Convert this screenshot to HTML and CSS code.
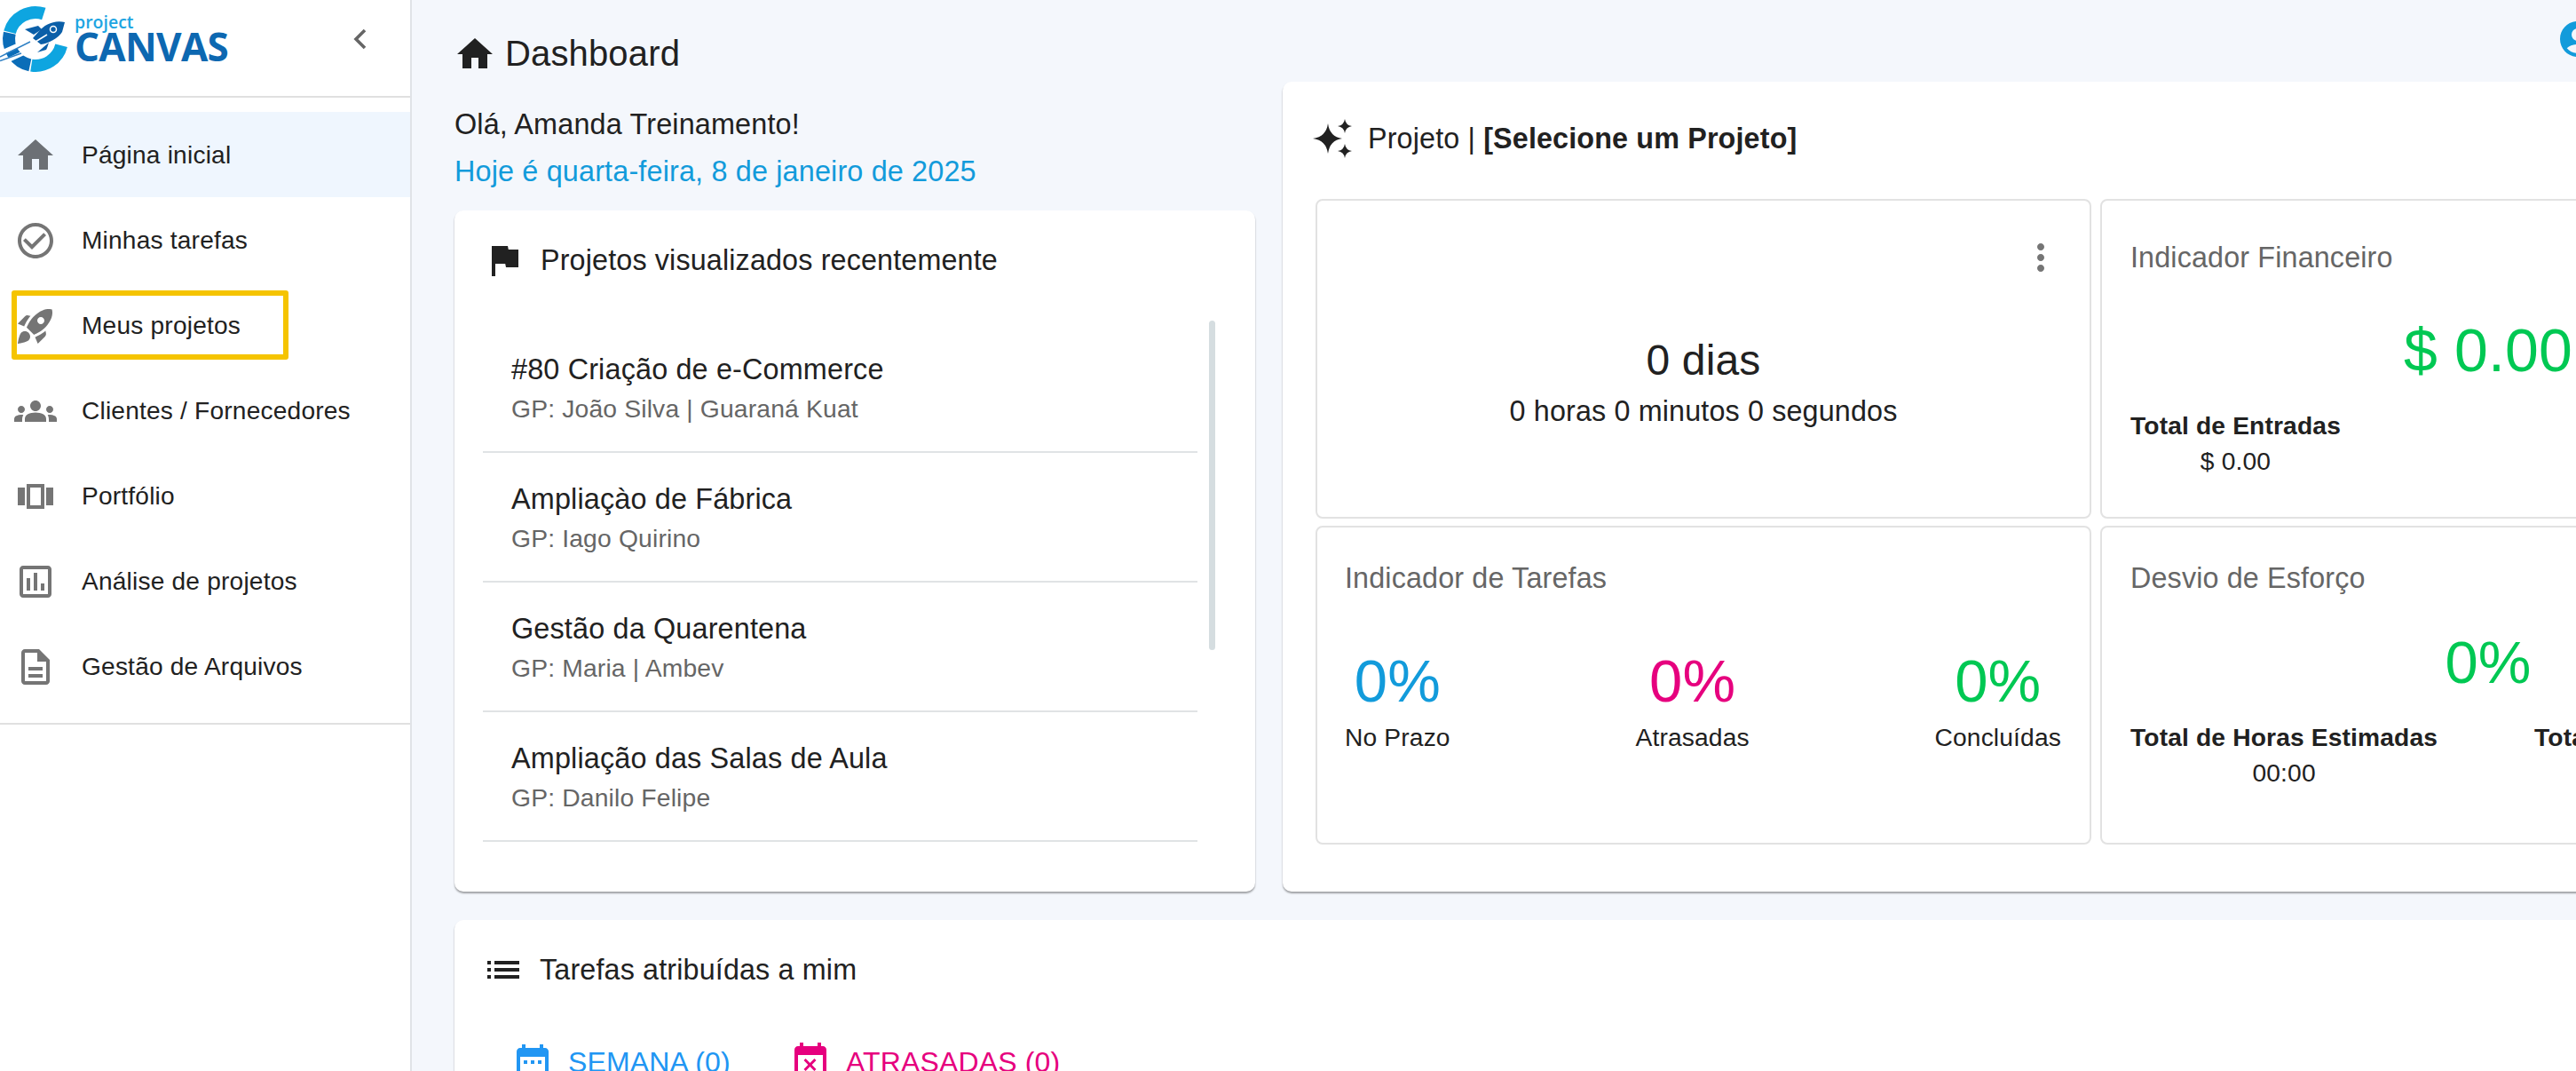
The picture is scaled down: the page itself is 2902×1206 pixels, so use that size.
FILE: index.html
```html
<!DOCTYPE html>
<html lang="pt-BR">
<head>
    <meta charset="UTF-8">
    <title>Project Canvas - Dashboard</title>
    <link rel="stylesheet" href="styles.css">
</head>
<body>
    <aside class="sidebar">
        <div class="sidebar-header">
            <div class="logo">
                <svg class="logo-mark" viewBox="0 0 80 88" width="80" height="88">
                    <g fill="none" stroke-width="14">
                        <path d="M49.3 15.5A30 30 0 0 0 11 36.2" stroke="#0ea5e0"/>
                        <path d="M10.8 37.3A30 30 0 0 0 33.8 73.3" stroke="#0b6db8"/>
                        <path d="M35.3 73.6A30 30 0 0 0 69.1 51.3" stroke="#0ea5e0"/>
                    </g>
                    <path d="M0 60L36 44M0 72L30 58" stroke="#fff" stroke-width="5" fill="none"/>
                    <path d="M0 64L34 47M0 68.500L24 60" stroke="#2f80c4" stroke-width="1.500" fill="none"/>
                    <path d="M73 25C61 22 50 28 44 35L37 43L46 50C54 49 66 43 70 36Z" fill="#0b5fa8"/>
                    <path d="M28 33L43 29L47 33L38 39Z" fill="#0b5fa8"/>
                    <path d="M42 59L55 48L53 54L52 56Z" fill="#0b5fa8"/>
                    <circle cx="60" cy="33" r="3.500" fill="#0b5fa8" stroke="#fff" stroke-width="1.500"/>
                    <path d="M40 47L53 39" stroke="#fff" stroke-width="1.500"/>
                </svg>
                <div class="wordmark">
                    <span class="wordmark-small">project</span>
                    <span class="wordmark-big">CANVAS</span>
                </div>
            </div>
            <svg class="collapse-icon" viewBox="0 0 18 26" width="18" height="26"><path d="M15 3L5 13l10 10" fill="none" stroke="currentColor" stroke-width="3.600"/></svg>
        </div>

        <nav class="menu">
            <a class="menu-item active">
                <svg class="icon" viewBox="0 0 24 24"><path d="M10 20v-6h4v6h5v-8h3L12 3 2 12h3v8z"/></svg>
                Página inicial
            </a>
            <a class="menu-item">
                <svg class="icon" viewBox="0 0 24 24"><path d="M16.59 7.58L10 14.17l-3.59-3.58L5 12l5 5 8-8zM12 2C6.48 2 2 6.48 2 12s4.48 10 10 10 10-4.48 10-10S17.52 2 12 2zm0 18c-4.42 0-8-3.58-8-8s3.58-8 8-8 8 3.58 8 8-3.58 8-8 8z"/></svg>
                Minhas tarefas
            </a>
            <a class="menu-item">
                <svg class="icon" viewBox="0 0 24 24"><path d="M9.19 6.35c-2.04 2.29-3.44 5.58-3.57 5.89L2 10.69l4.05-4.05c.47-.47 1.15-.68 1.81-.55l1.33.26zM11.17 17s3.74-1.55 5.89-3.7c5.4-5.4 4.5-9.62 4.21-10.57-.95-.3-5.17-1.19-10.57 4.21C8.55 9.09 7 12.83 7 12.83L11.17 17zm6.48-2.19c-2.29 2.04-5.58 3.44-5.89 3.57L13.31 22l4.05-4.05c.47-.47.68-1.15.55-1.81l-.26-1.33zM9 18c0 .83-.34 1.58-.88 2.12C6.94 21.3 2 22 2 22s.7-4.94 1.88-6.12C4.42 15.34 5.17 15 6 15c1.66 0 3 1.34 3 3zm4-9c0-1.1.9-2 2-2s2 .9 2 2-.9 2-2 2-2-.9-2-2z"/></svg>
                Meus projetos
                <span class="highlight"></span>
            </a>
            <a class="menu-item">
                <svg class="icon" viewBox="0 0 24 24"><path d="M12 12.75c1.63 0 3.07.39 4.24.9 1.08.48 1.76 1.56 1.76 2.73V18H6v-1.61c0-1.18.68-2.26 1.76-2.73 1.17-.52 2.61-.91 4.24-.91zM4 13c1.1 0 2-.9 2-2s-.9-2-2-2-2 .9-2 2 .9 2 2 2zm1.13 1.1c-.37-.06-.74-.1-1.13-.1-.99 0-1.93.21-2.78.58C.48 14.9 0 15.62 0 16.43V18h4.5v-1.61c0-.83.23-1.61.63-2.29zM20 13c1.1 0 2-.9 2-2s-.9-2-2-2-2 .9-2 2 .9 2 2 2zm4 3.43c0-.81-.48-1.53-1.22-1.85-.85-.37-1.79-.58-2.78-.58-.39 0-.76.04-1.13.1.4.68.63 1.46.63 2.29V18H24v-1.57zM12 6c1.66 0 3 1.34 3 3s-1.34 3-3 3-3-1.34-3-3 1.34-3 3-3z"/></svg>
                Clientes / Fornecedores
            </a>
            <a class="menu-item">
                <svg class="icon" viewBox="0 0 24 24"><path d="M2 7h4v10H2V7zm5 12h10V5H7v14zM9 7h6v10H9V7zm9 0h4v10h-4V7z"/></svg>
                Portfólio
            </a>
            <a class="menu-item">
                <svg class="icon" viewBox="0 0 24 24"><path d="M19 3H5c-1.100 0-2 .9-2 2v14c0 1.100.9 2 2 2h14c1.100 0 2-.9 2-2V5c0-1.100-.9-2-2-2zm0 16H5V5h14v14zM7 10h2v7H7zm4-3h2v10h-2zm4 6h2v4h-2z"/></svg>
                Análise de projetos
            </a>
            <a class="menu-item">
                <svg class="icon" viewBox="0 0 24 24"><path d="M8 16h8v2H8zm0-4h8v2H8zm6-10H6c-1.100 0-2 .9-2 2v16c0 1.100.89 2 1.990 2H18c1.100 0 2-.9 2-2V8l-6-6zm4 18H6V4h7v5h5v11z"/></svg>
                Gestão de Arquivos
            </a>
        </nav>
    </aside>

    <main class="main">
        <header class="page-head">
            <h1 class="page-title">
                <svg class="icon" viewBox="0 0 24 24"><path d="M10 20v-6h4v6h5v-8h3L12 3 2 12h3v8z"/></svg>
                Dashboard
            </h1>
            <svg class="icon user-icon" viewBox="0 0 24 24"><path d="M12 2C6.480 2 2 6.480 2 12s4.480 10 10 10 10-4.480 10-10S17.520 2 12 2zm0 4c1.930 0 3.500 1.570 3.500 3.500S13.930 13 12 13s-3.500-1.570-3.500-3.500S10.070 6 12 6zm0 14c-2.030 0-4.430-.82-6.140-2.880C7.550 15.800 9.680 15 12 15s4.450.8 6.140 2.120C16.430 19.180 14.030 20 12 20z"/></svg>
        </header>

        <div class="top-grid">
            <section class="left-col">
                <p class="greeting">Olá, Amanda Treinamento!</p>
                <p class="today">Hoje é quarta-feira, 8 de janeiro de 2025</p>

                <div class="card recent-card">
                    <div class="card-title">
                        <svg class="icon" viewBox="0 0 24 24"><path d="M14.400 6L14 4H5v17h2v-7h5.600l.4 2h7V6z"/></svg>
                        Projetos visualizados recentemente
                    </div>
                    <div class="recent-list">
                        <div class="recent-item">
                            <div class="recent-name">#80 Criação de e-Commerce</div>
                            <div class="recent-gp">GP: João Silva | Guaraná Kuat</div>
                        </div>
                        <div class="recent-item">
                            <div class="recent-name">Ampliaçào de Fábrica</div>
                            <div class="recent-gp">GP: Iago Quirino</div>
                        </div>
                        <div class="recent-item">
                            <div class="recent-name">Gestão da Quarentena</div>
                            <div class="recent-gp">GP: Maria | Ambev</div>
                        </div>
                        <div class="recent-item">
                            <div class="recent-name">Ampliação das Salas de Aula</div>
                            <div class="recent-gp">GP: Danilo Felipe</div>
                        </div>
                        <span class="scroll-thumb"></span>
                    </div>
                </div>
            </section>

            <section class="card project-card">
                <div class="card-title">
                    <svg class="sparkle" viewBox="0 0 48 48" width="48" height="48">
                        <path d="M19 7Q21 22 35 24Q21 26 19 41Q17 26 2 24Q17 22 19 7Z"/>
                        <path d="M38 2Q39 9 46 10Q39 11 38 18Q37 11 30 10Q37 9 38 2Z"/>
                        <path d="M38 30Q39 37 46 38Q39 39 38 46Q37 39 30 38Q37 37 38 30Z"/>
                    </svg>
                    <span>Projeto | <b>[Selecione um Projeto]</b></span>
                </div>

                <div class="indicators">
                    <div class="box timer-box">
                        <svg class="icon kebab" viewBox="0 0 24 24"><path d="M12 8c1.100 0 2-.9 2-2s-.9-2-2-2-2 .9-2 2 .9 2 2 2zm0 2c-1.100 0-2 .9-2 2s.9 2 2 2 2-.9 2-2-.9-2-2-2zm0 6c-1.100 0-2 .9-2 2s.9 2 2 2 2-.9 2-2-.9-2-2-2z"/></svg>
                        <div class="timer-days">0 dias</div>
                        <div class="timer-rest">0 horas 0 minutos 0 segundos</div>
                    </div>

                    <div class="box finance-box">
                        <div class="box-title">Indicador Financeiro</div>
                        <div class="big-value green finance-value">$ 0.00</div>
                        <div class="totals finance-totals">
                            <div class="total"><b>Total de Entradas</b><span>$ 0.00</span></div>
                            <div class="total"><b>Total de Saídas</b><span>$ 0.00</span></div>
                        </div>
                    </div>

                    <div class="box tasks-box">
                        <div class="box-title">Indicador de Tarefas</div>
                        <div class="task-stats">
                            <div class="task-stat"><div class="big-value blue">0%</div><span>No Prazo</span></div>
                            <div class="task-stat"><div class="big-value pink">0%</div><span>Atrasadas</span></div>
                            <div class="task-stat"><div class="big-value green">0%</div><span>Concluídas</span></div>
                        </div>
                    </div>

                    <div class="box effort-box">
                        <div class="box-title">Desvio de Esforço</div>
                        <div class="big-value green effort-value">0%</div>
                        <div class="totals effort-totals">
                            <div class="total"><b>Total de Horas Estimadas</b><span>00:00</span></div>
                            <div class="total"><b>Total de Horas Realizadas</b><span>00:00</span></div>
                        </div>
                    </div>
                </div>
            </section>
        </div>

        <section class="card tasks-card">
            <div class="card-title">
                <svg class="icon" viewBox="0 0 24 24"><path d="M3 13h2v-2H3v2zm0 4h2v-2H3v2zm0-8h2V7H3v2zm4 4h14v-2H7v2zm0 4h14v-2H7v2zM7 7v2h14V7H7z"/></svg>
                Tarefas atribuídas a mim
            </div>
            <div class="tabs">
                <a class="tab tab-week">
                    <svg class="icon" viewBox="0 0 24 24"><path d="M9 11H7v2h2v-2zm4 0h-2v2h2v-2zm4 0h-2v2h2v-2zm2-7h-1V2h-2v2H8V2H6v2H5c-1.110 0-1.990.9-1.990 2L3 20c0 1.100.89 2 2 2h14c1.100 0 2-.9 2-2V6c0-1.100-.9-2-2-2zm0 16H5V9h14v11z"/></svg>
                    SEMANA (0)
                </a>
                <a class="tab tab-late">
                    <svg class="icon" viewBox="0 0 24 24"><path d="M9.310 17l2.440-2.440L14.190 17l1.060-1.060-2.440-2.440 2.440-2.440L14.190 10l-2.440 2.440L9.310 10l-1.060 1.060 2.440 2.440-2.440 2.440L9.310 17zM19 3h-1V1h-2v2H8V1H6v2H5c-1.110 0-1.990.9-1.990 2L3 19c0 1.100.89 2 2 2h14c1.100 0 2-.9 2-2V5c0-1.100-.9-2-2-2zm0 16H5V8h14v11z"/></svg>
                    ATRASADAS (0)
                </a>
            </div>
        </section>
    </main>
</body>
</html>
```

FILE: styles.css
```css
* {
    box-sizing: border-box;
}
html, body {
    height: 100%;
}
body {
    margin: 0;
    display: flex;
    overflow: hidden;
    background-color: #fff;
    color: #212121;
    font-family: "Liberation Sans", Arial, sans-serif;
    letter-spacing: 0.15px;
}
p, h1 {
    margin: 0;
    font-weight: normal;
}
.icon {
    width: 48px;
    height: 48px;
    flex: none;
    fill: currentColor;
}

/* sidebar */
.sidebar {
    width: 464px;
    flex: none;
    background-color: #fff;
    border-right: 2px solid #e0e3e7;
}
.sidebar-header {
    height: 110px;
    display: flex;
    align-items: flex-start;
    justify-content: space-between;
    padding-right: 48px;
    border-bottom: 2px solid #e0e0e0;
}
.logo {
    display: flex;
}
.logo-mark {
    flex: none;
}
.wordmark {
    display: flex;
    flex-direction: column;
    margin-left: 4px;
    padding-top: 14px;
    font-family: "Open Sans", sans-serif;
    font-weight: 600;
    letter-spacing: 0;
}
.wordmark-small {
    color: #1ea5e2;
    font-size: 19.500px;
    line-height: 22px;
}
.wordmark-big {
    color: #0d68b1;
    font-size: 44px;
    line-height: 33px;
    font-weight: 700;
    letter-spacing: -0.7px;
}
.collapse-icon {
    margin-top: 31px;
    color: #666;
}
.menu {
    padding: 16px 0;
    border-bottom: 2px solid #e0e0e0;
}
.menu-item {
    position: relative;
    height: 96px;
    display: flex;
    align-items: center;
    gap: 28px;
    padding-left: 16px;
    padding-top: 1px;
    font-size: 28.100px;
    letter-spacing: 0.2px;
}
.menu-item .icon {
    color: #757575;
}
.menu-item.active {
    background-color: #eff6fe;
}
.menu-item.active .icon {
    color: #6c7075;
}
.highlight {
    position: absolute;
    left: 13px;
    top: 9px;
    width: 312px;
    height: 78px;
    border: 6px solid #f5c400;
    border-radius: 3px;
}

/* main area */
.main {
    flex: 1;
    min-width: 0;
    padding: 36px 0 0 48px;
    background-color: #f4f7fc;
}
.page-head {
    width: 2417px;
    display: flex;
    align-items: flex-start;
    justify-content: space-between;
    margin-left: -1px;
}
.page-title {
    display: flex;
    align-items: center;
    gap: 10px;
    height: 48px;
    padding-top: 1px;
    font-size: 40px;
}
.user-icon {
    margin-top: -16px;
    color: #129bdb;
}
.top-grid {
    width: 2764px;
    display: grid;
    grid-template-columns: 902px 1831px;
    column-gap: 31px;
    margin-top: 8px;
}
.left-col {
    display: flex;
    flex-direction: column;
}
.greeting {
    padding-top: 22px;
    font-size: 32.400px;
    line-height: 53px;
}
.today {
    margin-bottom: 17px;
    font-size: 32.400px;
    line-height: 53px;
    color: #129bdb;
}
.card {
    background-color: #fff;
    border-radius: 10px;
    box-shadow: 0 2px 2px rgba(0, 0, 0, 0.35);
}
.card-title {
    display: flex;
    align-items: center;
    gap: 17px;
    height: 48px;
    font-size: 32.300px;
}

/* recent projects */
.recent-card {
    flex: 1;
    padding: 32px 0 0 32px;
}
.recent-list {
    position: relative;
    width: 805px;
    margin-top: 44px;
    padding-top: 3px;
}
.recent-item {
    height: 146px;
    padding: 33px 32px 0;
    border-bottom: 2px solid #e0e3e5;
}
.recent-name {
    font-size: 32.400px;
    line-height: 38px;
}
.recent-gp {
    margin-top: 7px;
    font-size: 28.300px;
    line-height: 36px;
    color: #666;
}
.scroll-thumb {
    position: absolute;
    left: 818px;
    top: 0;
    width: 7px;
    height: 371px;
    border-radius: 4px;
    background-color: #d5dde0;
}

/* project card */
.project-card {
    height: 912px;
    padding: 40px 0 0 32px;
}
.sparkle {
    flex: none;
    fill: #212121;
}
.project-card .card-title {
    gap: 16px;
}
.indicators {
    display: grid;
    grid-template-columns: 874px 874px;
    grid-template-rows: 360px 359px;
    gap: 8px 10px;
    margin: 44px 0 0 5px;
}
.box {
    padding: 0 32px;
    border: 2px solid #e2e2e2;
    border-radius: 8px;
}
.box-title {
    font-size: 32.300px;
    line-height: 40px;
    color: #666;
}
.big-value {
    font-size: 67px;
    line-height: 80px;
}
.green {
    color: #00c853;
}
.blue {
    color: #129bdb;
}
.pink {
    color: #e6007e;
}
.timer-box {
    position: relative;
    padding-top: 150px;
    text-align: center;
}
.kebab {
    position: absolute;
    top: 40px;
    right: 31px;
    color: #757575;
}
.timer-days {
    font-size: 48px;
    line-height: 60px;
}
.timer-rest {
    margin-top: 4px;
    font-size: 32.300px;
    line-height: 46px;
}
.finance-box {
    padding-top: 44px;
}
.finance-value {
    margin-top: 44px;
    font-size: 68px;
    text-align: center;
}
.totals {
    display: flex;
    justify-content: space-between;
    font-size: 28.200px;
    line-height: 40px;
}
.finance-totals {
    margin-top: 25px;
}
.total {
    display: flex;
    flex-direction: column;
    align-items: center;
}
.tasks-box, .effort-box {
    padding-top: 37px;
}
.tasks-box {
    padding-left: 31px;
}
.task-stats {
    display: flex;
    justify-content: space-between;
    margin-top: 56px;
    font-size: 28.200px;
    line-height: 40px;
}
.task-stat {
    display: flex;
    flex-direction: column;
    align-items: center;
    gap: 3px;
}
.effort-value {
    margin-top: 35px;
    text-align: center;
}
.effort-totals {
    margin-top: 24px;
}

/* tasks card */
.tasks-card {
    width: 2764px;
    height: 300px;
    margin-top: 32px;
    padding: 32px 0 0 31px;
}
.tabs {
    display: flex;
    gap: 66px;
    margin: 56px 0 0 33px;
}
.tab {
    display: flex;
    align-items: center;
    gap: 16px;
    font-size: 32px;
}
.tab-week {
    color: #2196f3;
}
.tab-late {
    color: #e6007e;
}
```
